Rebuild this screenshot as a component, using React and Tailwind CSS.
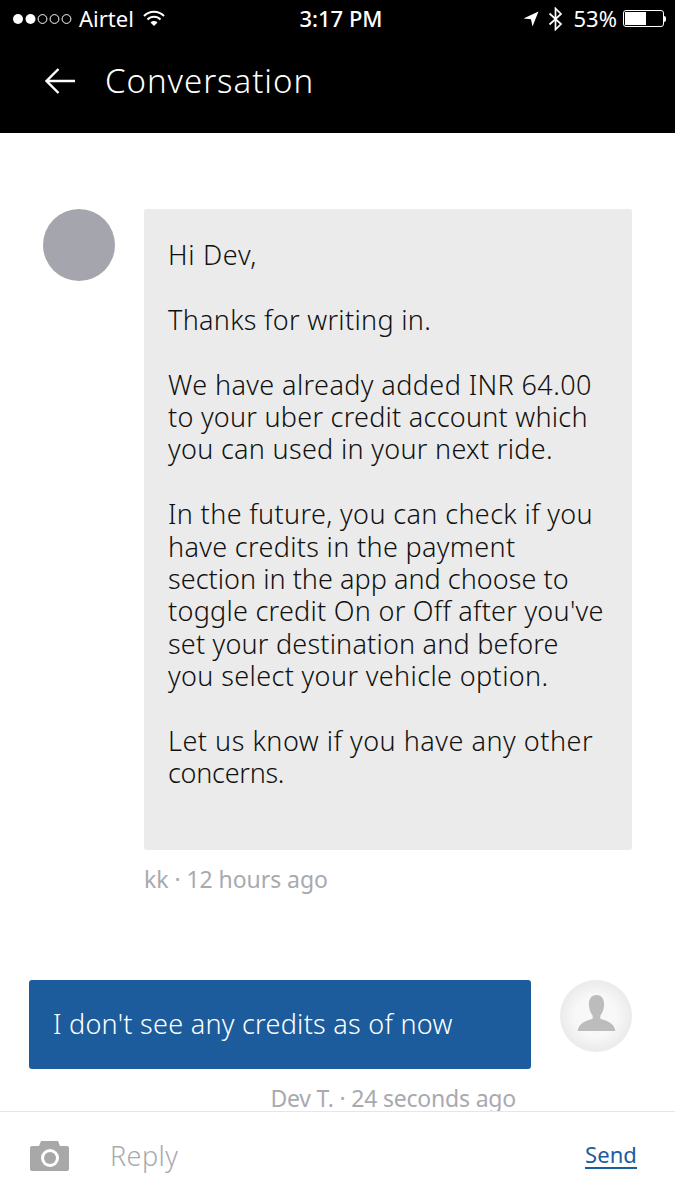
import React from "react";

// each line carries its own tracking so the line ends land where the original font put them
const message = [
  [["Hi Dev,", "tracking-[0.7px]"]],
  [["Thanks for writing in.", "tracking-[0.3px]"]],
  [
    ["We have already added INR 64.00", "tracking-[0.4px]"],
    ["to your uber credit account which", "tracking-[0.25px]"],
    ["you can used in your next ride.", "tracking-[0.3px]"],
  ],
  [
    ["In the future, you can check if you", "tracking-[0.37px]"],
    ["have credits in the payment", "tracking-[0.33px]"],
    ["section in the app and choose to", "tracking-[0.03px]"],
    ["toggle credit On or Off after you've", "tracking-[0.26px]"],
    ["set your destination and before", "tracking-[0.2px]"],
    ["you select your vehicle option.", "tracking-[0.37px]"],
  ],
  [
    ["Let us know if you have any other", "tracking-[0.52px]"],
    ["concerns.", "tracking-[-0.27px]"],
  ],
];

const StatusBar = () => (
  <div className="flex h-[37px] items-center justify-between pl-[12px] pr-[9px] text-[22px] text-white">
    <div className="flex w-[159px] items-center">
      <svg width="60" height="14" viewBox="0 0 60 14" className="mr-[7px]">
        <circle cx="6" cy="7" r="5" fill="#fff" />
        <circle cx="18.5" cy="7" r="5" fill="#fff" />
        <circle cx="30.5" cy="7" r="4.4" fill="none" stroke="#fff" strokeWidth="1" />
        <circle cx="42.5" cy="7" r="4.4" fill="none" stroke="#fff" strokeWidth="1" />
        <circle cx="54.5" cy="7" r="4.4" fill="none" stroke="#fff" strokeWidth="1" />
      </svg>
      <span>Airtel</span>
      <svg width="22" height="17" viewBox="0 0 22 17" className="ml-[9px] shrink-0">
        <path d="M1 6a14 14 0 0 1 20 0" fill="none" stroke="#fff" strokeWidth="2" />
        <path d="M4.5 9.5a9 9 0 0 1 13 0" fill="none" stroke="#fff" strokeWidth="2" />
        <path d="M7.5 12.5a5 5 0 0 1 7 0L11 16Z" fill="#fff" />
      </svg>
    </div>
    <div className="font-medium">3:17 PM</div>
    <div className="flex w-[155px] items-center justify-end">
      <svg width="16" height="16" viewBox="0 0 16 16" className="mr-[9px]">
        <path d="M15.5 0.5 0.5 7.5 8 8.2 9.5 15.5Z" fill="#fff" />
      </svg>
      <svg width="15" height="24" viewBox="0 0 15 24" className="mr-[11px]">
        <path d="M1.5 6.5 13 17l-5.5 5.5v-21L13 7 1.5 17.5" fill="none" stroke="#fff" strokeWidth="1.7" />
      </svg>
      <span className="mr-[6px]">53%</span>
      <div className="flex items-center">
        <div className="h-[17px] w-[41px] rounded-[3px] border border-white p-[1px]">
          <div className="h-full w-[21px] bg-white" />
        </div>
        <div className="h-[6px] w-[2px] rounded-r-[2px] bg-white" />
      </div>
    </div>
  </div>
);

const App = () => {
  return (
    <div className="flex h-[1200px] w-[675px] flex-col overflow-hidden bg-white font-['Noto_Sans',sans-serif]">
      {/* Top bar */}
      <div className="h-[133px] bg-black">
        <StatusBar />
        <div className="flex items-center pl-[45px] pt-[8px] text-white">
          <svg width="30" height="26" viewBox="0 0 30 26" className="mr-[30px]">
            <path d="M13.5 1 1.5 13l12 12M1.5 13H30" fill="none" stroke="#fff" strokeWidth="2.4" />
          </svg>
          <span className="text-[33px] font-light leading-[72px] tracking-[0.95px]">Conversation</span>
        </div>
      </div>

      {/* Messages */}
      <div className="flex-1 overflow-hidden pt-[76px]">
        <div className="flex items-start pl-[43px]">
          <div className="h-[72px] w-[72px] rounded-full bg-[#a5a5ad]" />
          <div className="ml-[29px]">
            <div className="h-[641px] w-[488px] rounded-[3px] bg-[#ebebeb] px-[24px] pt-[30px] text-[27px] font-light leading-[32.4px] text-[#111111]">
              {message.map((lines, i) => (
                <div key={i} className="mb-[32.4px]">
                  {lines.map(([line, tracking]) => (
                    <div key={line} className={`whitespace-nowrap ${tracking}`}>
                      {line}
                    </div>
                  ))}
                </div>
              ))}
            </div>
            <div className="mt-[13px] text-[23px] leading-[32px] tracking-[-0.05px] text-[#a9a9b0]">kk · 12 hours ago</div>
          </div>
        </div>

        <div className="mt-[85px] flex items-start pl-[29px]">
          <div>
            <div className="flex h-[89px] w-[502px] items-center rounded-[3px] bg-[#1c5c9c] px-[24px] text-[27px] font-light tracking-[0.27px] text-white">
              I don't see any credits as of now
            </div>
            <div className="mt-[13px] pr-[15px] text-right text-[23px] leading-[32px] tracking-[-0.2px] text-[#a9a9b0]">
              Dev T. · 24 seconds ago
            </div>
          </div>
          <div className="ml-[29px] flex h-[72px] w-[72px] items-center justify-center rounded-full bg-[radial-gradient(circle,#f8f8f8_40%,#dedede_100%)]">
            <svg width="41" height="36" viewBox="0 0 42 38" className="mb-[6px]">
              <path d="M21 0c6 0 8 5 8 10 0 5-2 9-4 12v3c6 2 15 4 16 13H1c1-9 10-11 16-13v-3c-2-3-4-7-4-12 0-5 2-10 8-10Z" fill="#bcbcbc" />
            </svg>
          </div>
        </div>
      </div>

      {/* Reply bar */}
      <div className="flex h-[89px] items-center border-t border-[#e6e6e6] bg-white pl-[30px] pr-[38px]">
        <svg width="39" height="30" viewBox="0 0 39 30" className="mr-[41px]">
          <path d="M2 5h7l2-5h17l2 5h7a2 2 0 0 1 2 2v21a2 2 0 0 1-2 2H2a2 2 0 0 1-2-2V7a2 2 0 0 1 2-2Z" fill="#a8a8a8" />
          <circle cx="20" cy="17" r="9" fill="#fff" />
          <circle cx="20" cy="17" r="6" fill="#a8a8a8" />
        </svg>
        <span className="flex-1 text-[27px] font-light tracking-[0.4px] text-[#a9a9b0]">Reply</span>
        <span className="mb-[3px] text-[22px] tracking-[0.1px] text-[#1c5c9c] underline underline-offset-4">Send</span>
      </div>
    </div>
  );
};

export default App;
